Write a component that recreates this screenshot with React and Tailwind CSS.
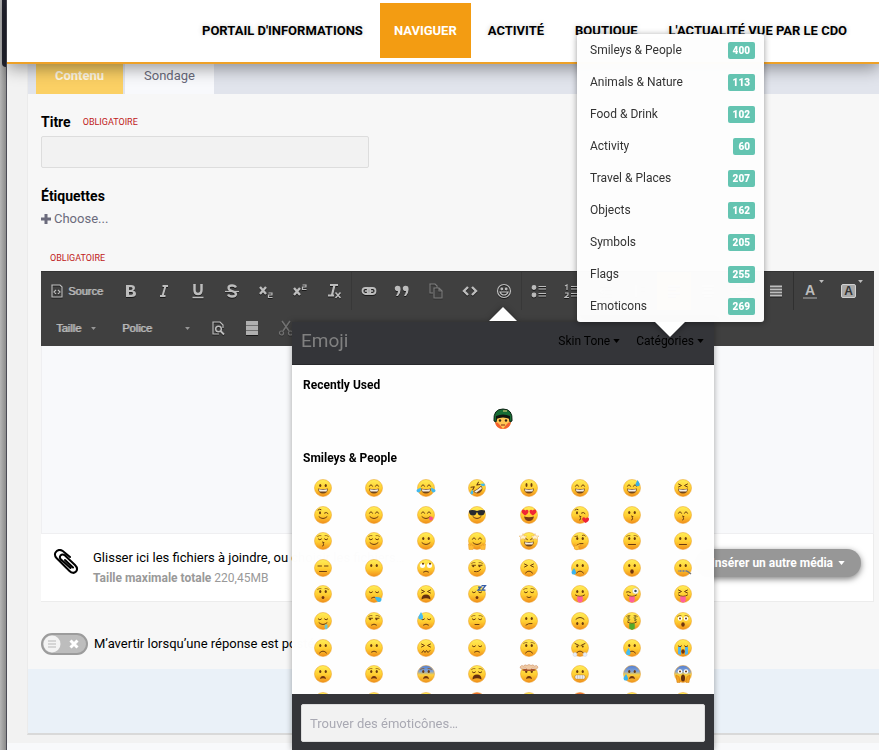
import { useState } from "react";

const navItems = ["Portail d'informations", "Naviguer", "Activité", "Boutique", "L'actualité vue par le CDO"];

const categories = [
  { name: "Smileys & People", count: 400 },
  { name: "Animals & Nature", count: 113 },
  { name: "Food & Drink", count: 102 },
  { name: "Activity", count: 60 },
  { name: "Travel & Places", count: 207 },
  { name: "Objects", count: 162 },
  { name: "Symbols", count: 205 },
  { name: "Flags", count: 255 },
  { name: "Emoticons", count: 269 },
];

// [name, eyes, mouth, extra, skin]
const smileys = [
  ["grinning", "dot", "grin"],
  ["beaming", "happy", "grin"],
  ["joy", "happy", "grin", "joyTears"],
  ["rofl", "squint", "grin", "rofl"],
  ["smiley", "tall", "grin"],
  ["smile", "happy", "grin"],
  ["sweat smile", "happy", "grin", "sweatRight"],
  ["laughing", "squint", "grin"],
  ["wink", "wink", "smile"],
  ["blush", "happy", "smile"],
  ["yum", "happy", "smile", "lick"],
  ["sunglasses", "shades", "smile"],
  ["heart eyes", "hearts", "openSmile"],
  ["kissing heart", "wink", "kiss", "heart"],
  ["kissing", "dot", "kiss"],
  ["kissing smiling eyes", "happy", "kiss"],
  ["kissing closed eyes", "closed", "kiss", "brows"],
  ["relaxed", "closed", "smile", "brows"],
  ["slightly smiling", "dot", "smile"],
  ["hugging", "happy", "smile", "hands"],
  ["star struck", "stars", "grin"],
  ["thinking", "dot", "slant", "think"],
  ["raised eyebrow", "dot", "flat", "brows"],
  ["neutral", "dot", "flat"],
  ["expressionless", "lines", "flat"],
  ["no mouth", "dot", "none"],
  ["rolling eyes", "roll", "smallFrown"],
  ["smirk", "side", "smirk", "brows"],
  ["persevere", "squint", "frown"],
  ["disappointed relieved", "dot", "frown", "sadDrop"],
  ["open mouth", "dot", "o"],
  ["zipper mouth", "dot", "zip"],
  ["hushed", "dot", "smallO", "brows"],
  ["sleepy", "closed", "smallFrown", "sleepDrop"],
  ["tired", "squint", "shout"],
  ["sleeping", "closed", "smallO", "zzz"],
  ["relieved", "closed", "smallSmile", "brows"],
  ["tongue", "dot", "tongue"],
  ["wink tongue", "crazy", "tongue"],
  ["squint tongue", "squint", "tongue"],
  ["drooling", "closed", "smile", "drool"],
  ["unamused", "side", "smallFrown", "brows"],
  ["sweat", "closed", "smallFrown", "sweatLeft"],
  ["pensive", "closed", "smallFlat", "brows"],
  ["confused", "dot", "slant"],
  ["upside down", "dot", "smile", "flip"],
  ["money mouth", "money", "moneyTongue", "brows"],
  ["astonished", "wide", "o", "brows"],
  ["frowning", "dot", "frown"],
  ["slightly frowning", "dot", "smallFrown"],
  ["confounded", "squint", "wave"],
  ["disappointed", "closed", "smallFrown"],
  ["worried", "dot", "frown", "brows"],
  ["triumph", "angry", "frown", "steam"],
  ["cry", "dot", "frown", "cryDrop"],
  ["sob", "closed", "o", "streams"],
  ["frowning open", "dot", "openFrown"],
  ["anguished", "dot", "openFrown", "brows"],
  ["fearful", "dot", "openFrown", "brows", "blue"],
  ["weary", "closed", "shout", "brows"],
  ["exploding head", "dot", "openFrown", "blast"],
  ["grimacing", "dot", "teeth"],
  ["cold sweat", "dot", "openFrown", "sadDrop", "blue"],
  ["scream", "wide", "scream", "cheeks", "blue"],
  ["flushed", "wide", "smallFlat"],
  ["dizzy", "squint", "o", "brows"],
  ["angry", "angry", "frown"],
  ["rage", "angry", "frown", null, "red"],
  ["mask", "happy", "flat"],
  ["cursing", "angry", "frown", null, "red"],
  ["halo", "closed", "smile", "brows"],
  ["cowboy", "closed", "smile", "brows"],
];

const INK = "#6b3c10";

function Eyes({ type }) {
  const line = { fill: "none", stroke: INK, strokeWidth: 2, strokeLinecap: "round", strokeLinejoin: "round" };
  switch (type) {
    case "tall":
      return <g fill={INK}><ellipse cx="13" cy="12" rx="2" ry="4" /><ellipse cx="23" cy="12" rx="2" ry="4" /></g>;
    case "happy":
      return <path {...line} d="M9 14.500Q12 8 15 14.500M21 14.500Q24 8 27 14.500" />;
    case "closed":
      return <path {...line} d="M8.500 14Q12 18 15 14M21 14Q24 18 27.500 14" />;
    case "squint":
      return <path {...line} d="M9 10L15 13L9 16M27 10L21 13L27 16" />;
    case "wink":
      return <><ellipse cx="12" cy="13.500" rx="2" ry="3" fill={INK} /><path {...line} d="M8 8Q11 5 14 7M21 14Q25 11 28 15" /></>;
    case "lines":
      return <path {...line} d="M8 14H15M21 14H28" />;
    case "side":
      return <><path {...line} d="M8 12.500H15M21 12.500H28" /><circle cx="10.500" cy="14.500" r="2" fill={INK} /><circle cx="23" cy="14.500" r="2" fill={INK} /></>;
    case "shades":
      return <path fill="#282a2f" d="M2 9Q10 7 18 10Q26 7 34 9V12Q32 20 25 19Q20 19 19 13H17Q16 19 11 19Q4 20 2 12Z" />;
    case "hearts":
      return <path fill="#f02735" d="M10 19Q1 13 4 8.500Q7 5 10.500 9Q15 6 17 10Q17 15 10 19M26 19Q35 13 32 8.500Q29 5 25.500 9Q21 6 19 10Q19 15 26 19" />;
    case "stars":
      return (
        <>
          <path {...line} d="M9 15Q12 11 15 15M21 15Q24 11 27 15" />
          <path fill="#fff1cd" stroke="#eab566" strokeWidth="1" d="M6 3L8 8L14 8L10 12L11 16L6 13L1 16L2 12L-2 8L4 8ZM30 3L32 8L38 8L34 12L35 16L30 13L25 16L26 12L22 8L28 8Z" />
        </>
      );
    case "roll":
      return <><g fill="#fff"><circle cx="11" cy="13" r="5" /><circle cx="25" cy="13" r="5" /></g><g fill={INK}><circle cx="12" cy="9.500" r="2.200" /><circle cx="26" cy="9.500" r="2.200" /></g></>;
    case "crazy":
      return <><path {...line} d="M7 14Q11 12 15 15" /><circle cx="25" cy="12" r="6" fill="#fff" stroke="#bfae85" /><circle cx="25" cy="12" r="2.500" fill="#364b61" /></>;
    case "wide":
      return <><g fill="#fff"><circle cx="12" cy="13" r="4.500" /><circle cx="24" cy="13" r="4.500" /></g><g fill={INK}><circle cx="12" cy="13" r="2" /><circle cx="24" cy="13" r="2" /></g></>;
    case "angry":
      return <><path {...line} d="M8 9L16 13M28 9L20 13" /><g fill={INK}><circle cx="12.500" cy="15" r="2" /><circle cx="23.500" cy="15" r="2" /></g></>;
    case "money":
      return <path fill="none" stroke="#79702c" strokeWidth="1.500" d="M14 10Q9 8 9 11.500T14 15Q14 18 9 16.500M11.500 7V19M27 10Q22 8 22 11.500T27 15Q27 18 22 16.500M24.500 7V19" />;
    default:
      return <g fill={INK}><ellipse cx="12.500" cy="13" rx="2.200" ry="3" /><ellipse cx="23.500" cy="13" rx="2.200" ry="3" /></g>;
  }
}

function Mouth({ type }) {
  const line = { fill: "none", stroke: INK, strokeWidth: 2, strokeLinecap: "round" };
  switch (type) {
    case "grin":
      return <><path fill="#70451c" d="M8 19Q18 21 28 19Q27 29 18 29Q9 29 8 19Z" /><path fill="#f4efe4" d="M9.500 20.500Q18 22 26.500 20.500L25 25H11Z" /></>;
    case "smile":
      return <path {...line} d="M10 21.500Q18 29 26 21.500" />;
    case "smallSmile":
      return <path {...line} d="M14 24Q18 27 22 24" />;
    case "openSmile":
      return <path fill="#763a16" d="M8 21Q18 24 28 21Q26 30 18 30Q10 30 8 21Z" />;
    case "kiss":
      return <path {...line} d="M17 20Q23 21 18 23.500Q23 25 17 28" />;
    case "flat":
      return <path {...line} d="M11 25H25" />;
    case "smallFlat":
      return <path {...line} d="M14 25H22" />;
    case "slant":
      return <path {...line} d="M12 26Q17 22 24 23" />;
    case "smirk":
      return <path {...line} d="M13 25Q22 27 25 21" />;
    case "frown":
      return <path {...line} d="M11 28Q18 20 25 28" />;
    case "smallFrown":
      return <path {...line} d="M13 26Q18 22 23 26" />;
    case "wave":
      return <path {...line} d="M10 27L13 23L16 27L19 23L22 27L26 23" />;
    case "o":
      return <ellipse cx="18" cy="25" rx="3.500" ry="4.500" fill="#70350f" />;
    case "smallO":
      return <ellipse cx="18" cy="25" rx="2.800" ry="3" fill="#70350f" />;
    case "scream":
      return <ellipse cx="18" cy="26" rx="4" ry="7" fill="#65300e" />;
    case "shout":
      return <path fill="#65300e" d="M9 29Q9 19 18 19Q27 19 27 29Q18 24 9 29Z" />;
    case "openFrown":
      return <path fill="#70350f" d="M12 28Q13 22 18 22Q23 22 24 28Q18 25 12 28Z" />;
    case "tongue":
      return <><path {...line} d="M9 20Q18 26 27 20" /><path fill="#ff609d" d="M12.500 23H23.500V30Q23 35 18 35Q13 35 12.500 30Z" /></>;
    case "moneyTongue":
      return <><path {...line} d="M9 20Q18 26 27 20" /><path fill="#55aa2c" d="M12.500 23H23.500V33L18 36L12.500 33Z" /></>;
    case "teeth":
      return <><rect x="8" y="20" width="20" height="8" rx="3" fill="#fff" stroke="#9c6b2a" /><path stroke="#aaa" strokeWidth="1" d="M9 24H27M13 20V28M18 20V28M23 20V28" /></>;
    case "zip":
      return <><path stroke="#898989" strokeWidth="4" strokeDasharray="2 1" d="M9 24H26" /><path stroke="#747474" strokeWidth="3" d="M26 24L34 30" /></>;
    default:
      return null;
  }
}

function Extra({ type }) {
  switch (type) {
    case "joyTears":
      return <g fill="#42b9ee"><path d="M8 17Q8 27 3 27Q-3 25 0 21Z" /><path d="M28 17Q28 27 33 27Q39 25 36 21Z" /></g>;
    case "rofl":
      return <g fill="#42b9ee"><path d="M8 15Q8 23 3 23Q-1 21 2 18Z" /><path d="M28 15Q28 23 33 23Q37 21 34 18Z" /></g>;
    case "sweatRight":
      return <path fill="#38aee8" d="M29 2Q36 11 32 14Q25 16 25 10Z" />;
    case "sweatLeft":
      return <path fill="#48bcf0" d="M8 0Q15 11 10 15Q1 16 3 9Z" />;
    case "lick":
      return <circle cx="28" cy="25" r="4" fill="#fa518a" />;
    case "heart":
      return <path fill="#ee2436" d="M29 34Q20 28 23 24Q26 21 29 25Q33 21 36 25Q37 30 29 34Z" />;
    case "brows":
      return <path fill="none" stroke="#925a18" strokeWidth="1.600" strokeLinecap="round" d="M7 9Q10 6 14 7M22 7Q26 6 29 9" />;
    case "hands":
      return <path fill="#ffbd35" stroke="#e79527" d="M1 24L5 27L6 23L9 28L13 28L10 35H2ZM35 24L31 27L30 23L27 28L23 28L26 35H34Z" />;
    case "think":
      return <><path fill="none" stroke="#925a18" strokeWidth="2" d="M7 9L14 8M22 7Q27 4 29 9" /><path fill="#ffc43b" stroke="#e28c16" d="M6 25L9 28L18 24L20 26L15 29L17 33Q12 38 7 34Z" /></>;
    case "sadDrop":
      return <path fill="#39b3ee" d="M6 18Q13 28 8 31Q1 32 1 26Z" />;
    case "cryDrop":
      return <path fill="#44bdf1" d="M11 18Q18 28 13 32Q6 33 6 27Z" />;
    case "sleepDrop":
      return <path fill="#41b9ea" d="M20 24Q32 23 33 28Q33 35 27 34Q22 33 20 24Z" />;
    case "zzz":
      return <path fill="none" stroke="#355ca7" strokeWidth="2.500" d="M20 4H26L20 10H26M27 1H35L28 10H35" />;
    case "drool":
      return <path fill="#6cc5d3" d="M22 25H27V33Q23 37 21 31Z" />;
    case "steam":
      return <g fill="#e9edf5" stroke="#cad0de"><circle cx="8" cy="31" r="4" /><circle cx="28" cy="31" r="4" /></g>;
    case "streams":
      return <path fill="#55b5eb" d="M8 16H14V32L8 30ZM22 16H28V30L22 32Z" />;
    case "blast":
      return (
        <>
          <path fill="#fdfdfd" d="M-1 -1H37V8H-1Z" />
          <path fill="#a9532b" d="M3 10Q10 6 18 8Q26 6 33 10L28 12L8 12Z" />
          <path fill="#efc9a4" stroke="#c98a5e" strokeWidth="1" d="M0 4Q3 -1 7 2Q10 -2 14 1Q18 -3 22 1Q26 -2 29 2Q34 -1 36 4Q36 8 31 7L24 6L21 9H15L12 6L5 7Q0 8 0 4Z" />
        </>
      );
    case "cheeks":
      return <path fill="#f4a323" stroke="#ce7d14" d="M4 20L10 23L12 35H6ZM32 20L26 23L24 35H30Z" />;
    default:
      return null;
  }
}

function Smiley({ face }) {
  const [, eyes, mouth, extra, skin] = face;
  const fill = skin === "blue" ? "url(#skin-blue)" : skin === "red" ? "url(#skin-red)" : "url(#skin)";
  const turn = extra === "flip" ? "rotate(180 18 18)" : extra === "rofl" ? "rotate(-35 18 18)" : undefined;
  return (
    <svg viewBox="0 0 36 36" className="h-[18px] w-[18px] overflow-visible" aria-hidden="true">
      <circle cx="18" cy="18" r="17" fill={fill} stroke="#e99a25" strokeWidth="1" />
      <g transform={turn}>
        <Eyes type={eyes} />
        <Mouth type={mouth} />
        <Extra type={extra} />
      </g>
    </svg>
  );
}

function SkinGradients() {
  return (
    <svg className="absolute h-0 w-0" aria-hidden="true">
      <defs>
        <linearGradient id="skin" x1="0" y1="0" x2="0" y2="1">
          <stop offset="0" stopColor="#ffee58" />
          <stop offset="0.55" stopColor="#ffcd30" />
          <stop offset="1" stopColor="#f08d1b" />
        </linearGradient>
        <linearGradient id="skin-blue" x1="0" y1="0" x2="0" y2="1">
          <stop offset="0" stopColor="#4e7fd9" />
          <stop offset="0.35" stopColor="#86a3cf" />
          <stop offset="0.55" stopColor="#ffd13b" />
          <stop offset="1" stopColor="#ee921d" />
        </linearGradient>
        <linearGradient id="skin-red" x1="0" y1="0" x2="0" y2="1">
          <stop offset="0" stopColor="#ef7433" />
          <stop offset="1" stopColor="#e43d24" />
        </linearGradient>
      </defs>
    </svg>
  );
}

function Soldier() {
  return (
    <svg viewBox="0 0 20 22" className="h-[22px] w-5" aria-hidden="true">
      <circle cx="10" cy="13" r="8" fill="#ffc653" />
      <path fill="#f4602f" d="M2 14Q5 14 7 17L10 21Q3 21 2 14ZM18 14Q15 14 13 17L10 21Q17 21 18 14Z" />
      <path fill="#176d35" stroke="#102415" d="M1 13Q0 1 10 1Q20 1 19 13L17 14L16 9Q10 7 4 9L3 14Z" />
      <path fill="#101510" d="M3 8Q10 5 17 8V11Q10 8 3 11Z" />
      <path stroke="#efd77a" d="M10 3H14" />
      <circle cx="7" cy="12.500" r="1.200" fill="#312316" />
      <circle cx="13" cy="12.500" r="1.200" fill="#312316" />
      <path stroke="#812817" d="M8 17H12" />
    </svg>
  );
}

const toolIcons = {
  Bold: <path d="M4 2H9Q13 2 13 5Q13 7 11 7.600Q14 8.500 14 11Q14 14 9.500 14H4ZM7 4.300V7H9Q10.500 7 10.500 5.600Q10.500 4.300 9 4.300ZM7 9V11.700H9.500Q11 11.700 11 10.300Q11 9 9.500 9Z" fill="currentColor" fillRule="evenodd" stroke="none" />,
  Italic: <path d="M6.500 3H12M4 13H9.500M9.500 3L6.500 13" strokeWidth="2" />,
  Underline: <><path d="M4.500 1V7Q4.500 11 8 11T11.500 7V1" strokeWidth="2.500" /><path d="M2.500 14.500H13.500" strokeWidth="1.500" /></>,
  Strike: <><path d="M12 4.500Q11 2.500 8 2.500Q4.500 2.500 4.500 5Q4.500 7 8 8T12 11Q12 13.500 8 13.500Q5 13.500 4 11.500" strokeWidth="2.300" /><path d="M1 8.500H15" /></>,
  Subscript: <><path d="M2 4L8 11M8 4L2 11" strokeWidth="2.400" /><path d="M10.500 10H14V12H10.500V14.500H14.500" /></>,
  Superscript: <><path d="M2 5L8 12M8 5L2 12" strokeWidth="2.400" /><path d="M10.500 2H14V4H10.500V6.500H14.500" /></>,
  "Remove format": <><path d="M4 2H12M8.500 2L6 12M2 12.500H8" strokeWidth="2.200" /><path d="M9.500 9.500L14.500 15M14.500 9.500L9.500 15" strokeWidth="1.500" /></>,
  Link: <><rect x="1.500" y="5" width="8" height="6" rx="3" strokeWidth="1.800" /><rect x="6.500" y="5" width="8" height="6" rx="3" strokeWidth="1.800" /><path d="M4 8H12" strokeWidth="1.500" /></>,
  Quote: <path fill="currentColor" stroke="none" d="M1 4Q3 2 6 3.500Q8 8 4 13H2Q4 10 4 8Q0 8 1 4ZM9 4Q11 2 14 3.500Q16 8 12 13H10Q12 10 12 8Q8 8 9 4Z" />,
  Copy: <path opacity="0.5" d="M5 10H2V1H7L9 3V5M6 5H11L14 8V15H6ZM11 5V8H14" />,
  Code: <path d="M6 4L2 8L6 12M10 4L14 8L10 12" strokeWidth="2.400" />,
  Emoji: <><circle cx="8" cy="8" r="6.500" /><circle cx="5.800" cy="6" r=".8" fill="currentColor" /><circle cx="10.200" cy="6" r=".8" fill="currentColor" /><path d="M4 9H12Q11 12 8 12T4 9Z" /></>,
  "Bulleted list": <><circle cx="3" cy="4.500" r="1.800" fill="currentColor" /><circle cx="3" cy="12" r="1.800" fill="currentColor" /><path d="M7.500 3.500H15M7.500 6H15M7.500 10.500H15M7.500 13H15" /></>,
  "Numbered list": <><path d="M1 3L3 2V7M1 10H4V12L1 14.500H5M7 3.500H15M7 6H15M7 10.500H15M7 13H15" /></>,
  Outdent: <path d="M2 3H14M7 6H14M7 10H14M2 13H14M5 6L2 8L5 10" />,
  Indent: <path d="M4 2V14M9 3H13M9 7H13" />,
  "Align left": <path d="M2 3H14M2 6H10M2 10H14M2 13H10" strokeWidth="1.500" />,
  "Align center": <path d="M2 3H14M4 6H12M2 10H14M4 13H12" strokeWidth="1.500" />,
  "Align right": <path d="M2 3H14M6 6H14M2 10H14M6 13H14" strokeWidth="1.500" />,
  Justify: <path d="M2 3.500H14M2 6.500H14M2 9.500H14M2 12.500H14" strokeWidth="1.800" />,
};

function ToolIcon({ children }) {
  return (
    <svg
      viewBox="0 0 16 16"
      className="h-4 w-4 drop-shadow-[0_1px_0_#1a1a1a]"
      fill="none"
      stroke="currentColor"
      strokeWidth="1.200"
      aria-hidden="true"
    >
      {children}
    </svg>
  );
}

function Caret({ className }) {
  return (
    <svg viewBox="0 0 8 5" className={className} aria-hidden="true">
      <path d="M0 0H8L4 5Z" fill="currentColor" />
    </svg>
  );
}

function Toolbar() {
  return (
    <div className="h-[75px] overflow-hidden border-t border-[#333] bg-[#404040] font-['Liberation_Sans',sans-serif] text-[11px] text-[#bdbdbd]">
      <div className="flex h-[38px] items-center">
        <button type="button" className="flex w-[72px] shrink-0 items-center gap-[3px] pl-2 [text-shadow:1px_0_0_#a0a0a0]">
          <ToolIcon>
            <path d="M3 2H11L13 4V14H3ZM7 7L5 9L7 11M9 7L11 9L9 11" />
          </ToolIcon>
          Source
        </button>
        {Object.entries(toolIcons).map(([name, icon]) => (
          <button
            key={name}
            type="button"
            aria-label={name}
            className={`flex h-[38px] w-[34px] shrink-0 items-center justify-center ${
              name === "Align left" ? "bg-[#f0a33c]" : ""
            } ${name === "Link" || name === "Bulleted list" ? "border-l border-[#383838]" : ""}`}
          >
            <ToolIcon>{icon}</ToolIcon>
          </button>
        ))}
        <button type="button" aria-label="Couleur du texte" className="flex h-[38px] w-9 shrink-0 items-center justify-center gap-0.5 border-l border-[#303030] pl-1">
          <span className="border-b-2 border-[#777] px-0.5 text-sm leading-[14px] font-bold">A</span>
          <Caret className="mb-5 h-[3px] w-[5px]" />
        </button>
        <button type="button" aria-label="Couleur d'arrière-plan" className="flex h-[38px] w-10 shrink-0 items-center justify-center gap-0.5 pl-1.5">
          <span className="rounded-xs border border-[#d0d0d0] bg-[#a8a8a8] px-0.5 text-xs leading-3 font-bold text-[#333]">A</span>
          <Caret className="mb-5 h-[3px] w-[5px]" />
        </button>
      </div>
      <div className="flex h-9 items-center">
        <div className="flex w-[66px] items-center pl-3">
          <select aria-label="Taille" className="w-[38px] appearance-none bg-transparent pl-[3px] outline-none [text-shadow:1px_0_0_#a0a0a0]">
            <option>Taille</option>
          </select>
          <Caret className="h-[3px] w-[5px] opacity-70" />
        </div>
        <div className="flex w-[94px] items-center pl-3">
          <select aria-label="Police" className="w-[66px] appearance-none bg-transparent pl-[3px] outline-none [text-shadow:1px_0_0_#a0a0a0]">
            <option>Police</option>
          </select>
          <Caret className="h-[3px] w-[5px] opacity-70" />
        </div>
        <button type="button" aria-label="Aperçu" className="flex w-[34px] justify-center">
          <ToolIcon>
            <path d="M13 8V5L10 2H3V14H9" />
            <circle cx="8.500" cy="9" r="2.800" strokeWidth="1.500" />
            <path d="M10.500 11L14 14.500" strokeWidth="1.800" />
          </ToolIcon>
        </button>
        <button type="button" aria-label="Modèles" className="flex w-[34px] justify-center">
          <ToolIcon>
            <path d="M2 1H14V15H2Z" fill="#b0b0b0" stroke="none" />
            <path d="M2 5.500H14M2 10.500H14" stroke="#707070" />
          </ToolIcon>
        </button>
        <button type="button" aria-label="Couper" className="flex w-[34px] justify-center opacity-40">
          <ToolIcon>
            <path d="M4 1L11 11M12 1L5 11" strokeWidth="1.500" />
            <circle cx="3.500" cy="13" r="2" />
            <circle cx="12.500" cy="13" r="2" />
          </ToolIcon>
        </button>
      </div>
    </div>
  );
}

function EmojiPicker() {
  const [search, setSearch] = useState("");

  return (
    <div className="absolute top-[307px] left-[292px] z-20 w-[422px] drop-shadow-[0_0_3px_rgba(0,0,0,0.35)]">
      <SkinGradients />
      <svg viewBox="0 0 28 15" className="ml-[197px] h-[15px] w-7" aria-hidden="true">
        <path d="M0 14L14 0L28 14Z" fill="#fff" />
      </svg>
      <div className="flex h-[43px] items-center border-b border-[#28292c] bg-[#343539] pr-2.5 pb-1 pl-[9px] text-xs text-black">
        <h2 className="grow text-[19px] leading-6 text-[#808080]">Emoji</h2>
        <button type="button" className="flex items-center gap-[3px]">
          Skin Tone
          <Caret className="h-1 w-[7px]" />
        </button>
        <button type="button" className="ml-4 flex items-center gap-[3px]">
          Catégories
          <Caret className="h-1 w-[7px]" />
        </button>
      </div>
      <div className="h-[329px] overflow-hidden bg-white/99 text-black">
        <h3 className="px-[11px] pt-2.5 text-xs leading-5 font-bold">Recently Used</h3>
        <div className="flex h-12 items-center justify-center">
          <button type="button" aria-label="Soldier">
            <Soldier />
          </button>
        </div>
        <h3 className="px-[11px] pt-[5px] text-xs leading-5 font-bold">Smileys &amp; People</h3>
        <div className="mt-[7px] grid h-[239px] grid-cols-8 grid-rows-9 px-[5px]">
          {smileys.map((face) => (
            <button key={face[0]} type="button" aria-label={face[0]} className="flex items-center justify-center">
              <Smiley face={face} />
            </button>
          ))}
        </div>
      </div>
      <div className="bg-[#343539] px-[9px] pt-2.5 pb-2">
        <input
          type="text"
          value={search}
          onChange={(e) => setSearch(e.target.value)}
          aria-label="Trouver des émoticônes"
          placeholder="Trouver des émoticônes…"
          className="block h-[38px] w-full rounded-xs border border-[#ddd] bg-[#f2f2f2] px-2 text-[13px] outline-none placeholder:text-[#a9a9b3]"
        />
      </div>
    </div>
  );
}

function CategoryMenu() {
  return (
    <div className="absolute top-[34px] left-[577px] z-30 w-[187px] drop-shadow-[0_1px_3px_rgba(0,0,0,0.4)]">
      <ul className="rounded-[3px] bg-white/98">
        {categories.map((category) => (
          <li key={category.name}>
            <button type="button" className="flex h-8 w-full items-center justify-between pr-[9px] pl-[13px] text-xs text-[#333]">
              {category.name}
              <span className="rounded-xs bg-[#64c4b1] px-[5px] text-[10px] leading-[17px] font-black text-white">
                {category.count}
              </span>
            </button>
          </li>
        ))}
      </ul>
      <svg viewBox="0 0 30 15" className="ml-[78px] h-[15px] w-[30px]" aria-hidden="true">
        <path d="M0 0H30L15 15Z" fill="#fff" />
      </svg>
    </div>
  );
}

export default function App() {
  const [title, setTitle] = useState("");
  const [notify, setNotify] = useState(false);

  return (
    <div className="relative flex h-screen overflow-hidden bg-[#f2f2f2] font-[Roboto,sans-serif] text-[13px] text-black">
      <div className="w-[7px] shrink-0 border-r border-[#4b4b55] bg-linear-to-r from-[#b5b5b5] to-[#8b8b8b]">
        <div className="ml-0.5 h-[67px] rounded-bl-sm bg-[#22232e]" />
      </div>

      <div className="flex min-w-0 grow flex-col">
        {/* Main navigation */}
        <nav className="relative z-10 flex h-16 shrink-0 gap-[3px] border-b-2 border-[#eea127] bg-white pt-[3px] pl-[181px] shadow-[0_4px_16px_rgba(0,0,0,0.4)]">
          {navItems.map((item) => (
            <a
              key={item}
              href="#"
              className={`flex h-[55px] items-center px-3.5 font-bold whitespace-nowrap uppercase ${
                item === "Naviguer" ? "bg-[#f39c12] text-white" : "text-black [text-shadow:0_0_5px_#ccc]"
              }`}
            >
              {item}
            </a>
          ))}
        </nav>

        <main className="ml-5 border-b-2 border-l border-b-[#d9d9d9] border-l-[#ebebeb] bg-[#f7f7f7]">
          <div className="flex h-[30px] gap-0.5 bg-[#e1e4ec] pl-2">
            <button type="button" className="w-[87px] bg-[#fbd064] pb-1.5 font-bold text-[#fff8e5]">Contenu</button>
            <button type="button" className="w-[89px] bg-[#f8f9fc] pb-1.5 text-[#69697a]">Sondage</button>
          </div>

          <form className="pt-[18px]" onSubmit={(e) => e.preventDefault()}>
            <div className="pr-[5px] pl-[13px]">
              <div className="flex h-5 items-center">
                <label htmlFor="title" className="text-sm font-bold">Titre</label>
                <span className="ml-3 pt-0.5 text-[9px] text-[#bf2020]">OBLIGATOIRE</span>
              </div>
              <input
                id="title"
                type="text"
                value={title}
                onChange={(e) => setTitle(e.target.value)}
                className="mt-1 block h-8 w-[328px] rounded-xs border border-[#ddd] bg-[#f2f2f2] px-2 outline-none"
              />

              <p className="mt-[18px] text-sm leading-5 font-bold">Étiquettes</p>
              <button type="button" className="mt-[3px] flex items-center gap-[3px] leading-5 text-[#6b6b7c]">
                <svg viewBox="0 0 10 10" className="h-2.5 w-2.5" aria-hidden="true">
                  <path d="M5 0V10M0 5H10" stroke="currentColor" strokeWidth="3" />
                </svg>
                Choose...
              </button>

              <p className="mt-[19px] pl-[9px] text-[9px] leading-5 text-[#bf2020]">OBLIGATOIRE</p>

              <div className="mt-[3px]">
                <Toolbar />
                <textarea
                  aria-label="Message"
                  className="block h-[188px] w-full resize-none border border-t-0 border-[#efeff1] bg-[#f8f9fb] p-4 outline-none"
                />
                <div className="flex h-[68px] items-center border-r border-b border-[#ececec] bg-white pr-3">
                  <svg viewBox="0 0 26 26" className="mb-3 ml-3 h-[26px] w-[26px] shrink-0" fill="none" stroke="#000" strokeWidth="2" strokeLinecap="round" aria-hidden="true">
                    <path d="M17 8L9.500 1.800Q5 -.5 2.500 3.500Q1 6 3.500 9L16.500 22Q20 25.500 23 22.500Q25.500 19.500 22 16L12 6.500Q9.500 4.500 7.500 6.500Q6 8.500 8 10.500L17.500 19M12 11L20 18.500" />
                  </svg>
                  <div className="ml-3.5 grow whitespace-nowrap">
                    <p className="leading-5">
                      Glisser ici les fichiers à joindre, ou <button type="button">choisir les fichiers…</button>
                    </p>
                    <p className="text-xs leading-5 text-[#999]">
                      <strong className="font-bold">Taille maximale totale</strong> 220,45MB
                    </p>
                  </div>
                  <button
                    type="button"
                    className="mb-2.5 flex h-7 shrink-0 items-center gap-[5px] rounded-full bg-[#979797] px-4 text-xs font-bold text-white shadow-[0_2px_6px_rgba(0,0,0,0.5)]"
                  >
                    Insérer un autre média
                    <Caret className="h-1 w-[7px]" />
                  </button>
                </div>
              </div>

              <label className="mt-[31px] mb-3.5 flex h-[22px] items-center gap-1.5 whitespace-nowrap">
                <input
                  type="checkbox"
                  checked={notify}
                  onChange={(e) => setNotify(e.target.checked)}
                  className="sr-only"
                />
                <svg viewBox="0 0 47 22" className="h-[22px] w-[47px]" aria-hidden="true">
                  <rect x="1" y="1" width="45" height="20" rx="10" fill="#bdbdbd" stroke="#9c9c9c" strokeWidth="2" />
                  <circle cx="11" cy="11" r="8.500" fill="#f3f3f3" />
                  <path d="M7 8H15M7 11H15M7 14H15" stroke="#ccc" strokeWidth="1.500" />
                  <path d="M29.500 7.500L36.500 14.500M36.500 7.500L29.500 14.500" stroke="#fff" strokeWidth="3" />
                </svg>
                M’avertir lorsqu’une réponse est postée
              </label>
            </div>
            <div className="h-16 bg-[#eaf1f8]" />
          </form>
        </main>
        <div className="mt-2 grow bg-[#f8f9fb]" />
      </div>

      <EmojiPicker />
      <CategoryMenu />
    </div>
  );
}
